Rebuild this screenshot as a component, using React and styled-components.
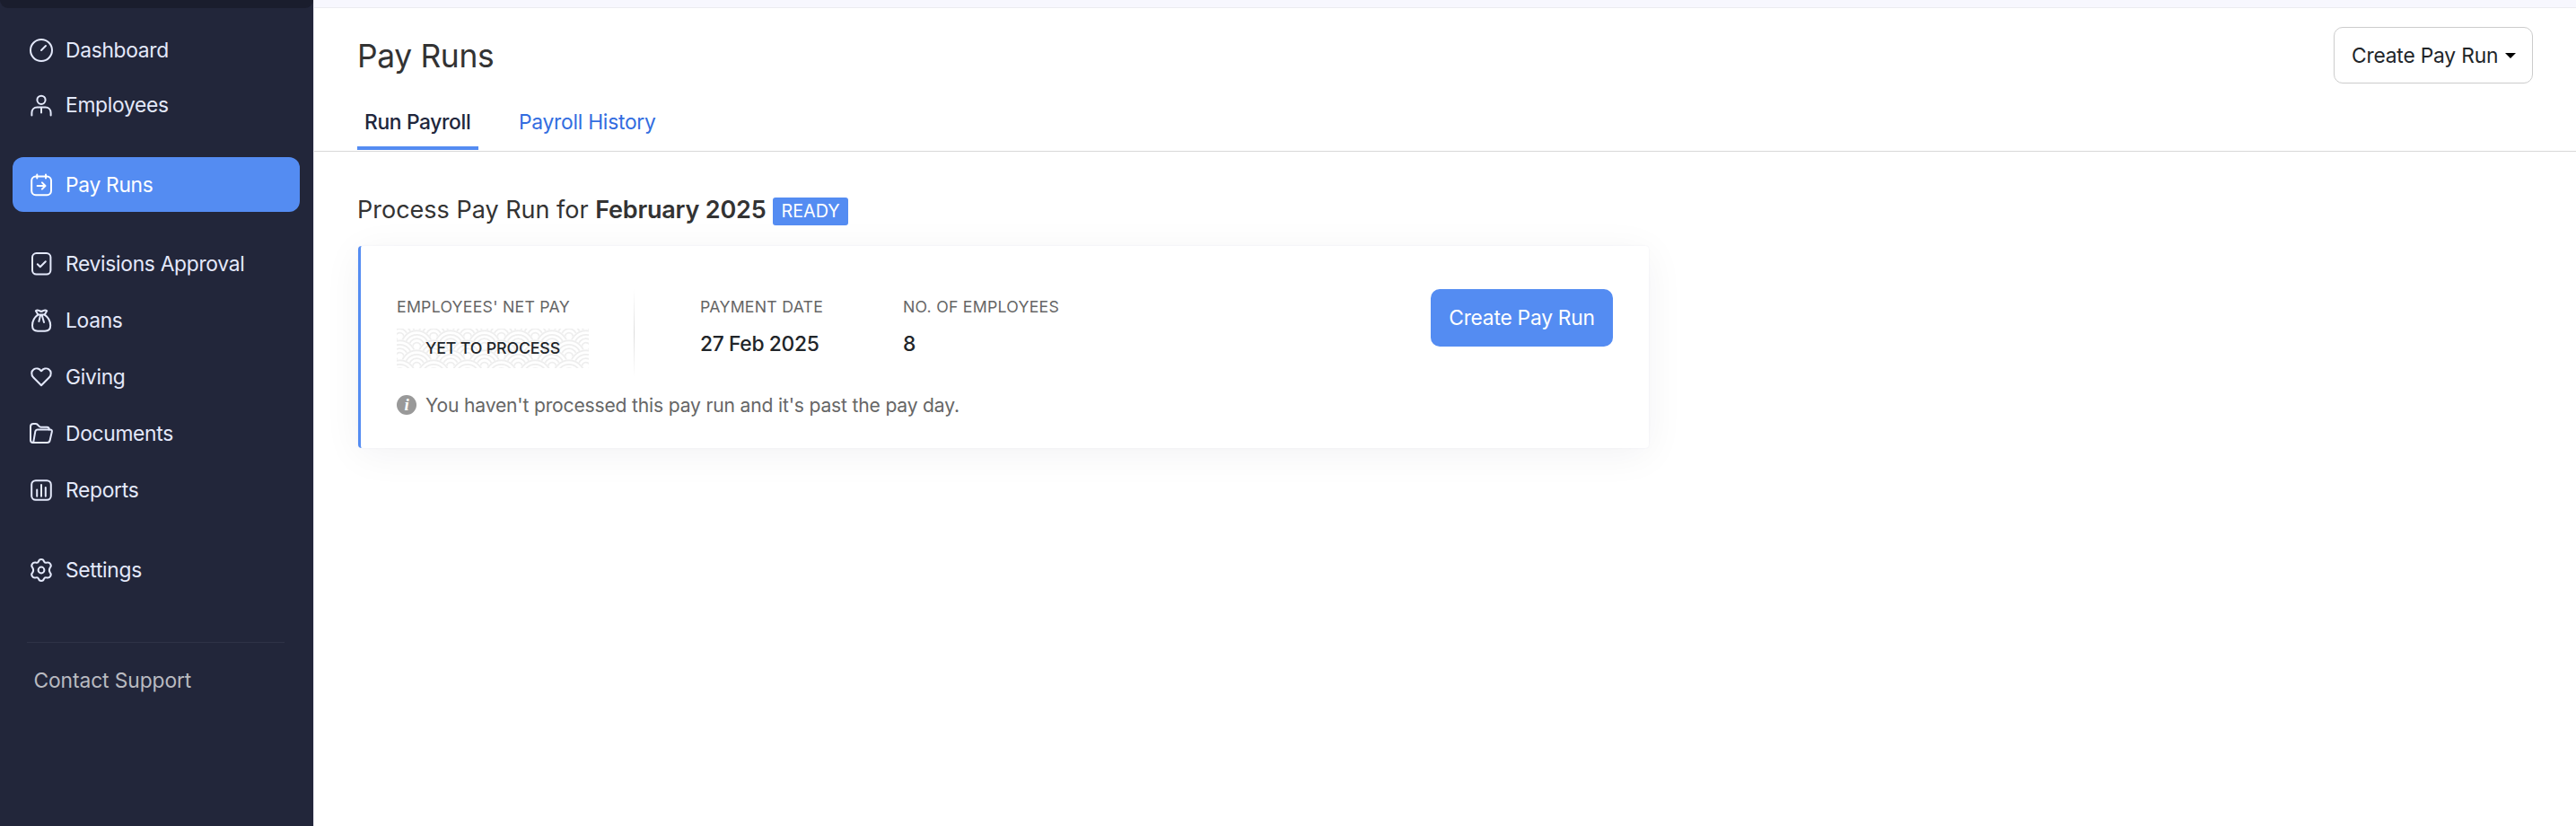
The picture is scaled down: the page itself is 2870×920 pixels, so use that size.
import React from "react"
import styled, { createGlobalStyle } from "styled-components"

const iconPaths = {
  dashboard: (
    <>
      <circle cx="13" cy="13" r="12" />
      <path d="M13 13l5-5" />
    </>
  ),
  employees: (
    <>
      <circle cx="13" cy="7.3" r="4.6" />
      <path d="M2.4 24.4v-2.6c0-3.9 2.6-6.2 6-6.2h9.2c3.4 0 6 2.3 6 6.2v2.6M13 15.8v5.6" />
    </>
  ),
  payRuns: (
    <>
      <rect x="2.2" y="3.6" width="21.8" height="20.6" rx="4.6" />
      <path d="M8.3 1.6v4M18 1.6v4M8.6 14h8.6M13.9 10.4l3.6 3.6-3.6 3.6" />
    </>
  ),
  revisions: (
    <>
      <rect x="3" y="1" width="20.4" height="23.6" rx="4.6" />
      <path d="M8.8 13.2l3 3 6-6" />
    </>
  ),
  loans: (
    <>
      <path d="M9.4 6.4L6.9 2.2C8.6.6 10 1.6 11 2.2c1.2.8 2.8.8 4 0 1-.6 2.6-1.4 4.2 0L16.7 6.4" />
      <path d="M8.8 6.6h8.4M9.2 6.6C5 9.6 3 14.6 3 18.6 3 22.6 5.2 24.8 9 24.8h8c3.8 0 6.2-2.2 6.2-6.2 0-4-2.2-9-6.4-12M12 7.2L10.4 14M13.8 7.2L16 15" />
    </>
  ),
  giving: <path d="M13 22.2L4.3 13.5C1.3 10.4 1.8 6.2 4.6 4.3c2.8-1.8 6.2-.8 8.4 2 2.2-2.8 5.6-3.8 8.4-2 2.8 1.9 3.3 6.1.3 9.2z" />,
  documents: (
    <>
      <path d="M3.6 22.9C1.8 22.9 1 21.9 1 20.3V5.3c0-2.2 1-3.2 3.2-3.2h2.6c3 0 3.2 3.7 5.8 3.7h6.8c1.6 0 2.4.8 2.4 2.6" />
      <path d="M3.6 22.9h16c1.8 0 2.6-.6 3-2.4L24.8 11c.4-1.7-.4-2.6-2-2.6H9c-1.6 0-2.3.7-2.7 2.2L4.2 22.6" />
    </>
  ),
  reports: (
    <>
      <rect x="2.2" y="2.2" width="21.6" height="21.6" rx="4.6" />
      <path d="M8.2 12.6v7.2M13 7v12.8M17.8 10v9.8" />
    </>
  ),
  settings: (
    <>
      <circle cx="13" cy="13" r="3.4" />
      <path d="M10.1 3.2Q10.5 1 13 1T15.9 3.2Q16.8 5.4 19.1 4.6 21.8 3.9 23.2 6.3T22.7 10.2Q21 13 22.7 15.8 24.5 17.5 23.2 19.7T19.1 21.4Q16.8 20.6 15.9 22.8 15.5 25 13 25T10.1 22.8Q9.2 20.6 6.9 21.4 4.2 22.1 2.8 19.7T3.3 15.8Q5 13 3.3 10.2 1.5 8.5 2.8 6.3T6.9 4.6Q9.2 5.4 10.1 3.2z" />
    </>
  ),
}

const navData = [
  { title: "Dashboard", icon: "dashboard", height: 61 },
  { title: "Employees", icon: "employees", height: 61 },
  { title: "Pay Runs", icon: "payRuns", active: true, gap: 28, height: 61 },
  { title: "Revisions Approval", icon: "revisions", gap: 26, height: 63 },
  { title: "Loans", icon: "loans", height: 63 },
  { title: "Giving", icon: "giving", height: 63 },
  { title: "Documents", icon: "documents", height: 63 },
  { title: "Reports", icon: "reports", height: 63 },
  { title: "Settings", icon: "settings", gap: 26, height: 63 },
]

// overlapping fans, every second row shifted by half a fan
const Waves = () => {
  const rows = [0, 1, 2, 3, 4, 5, 6, 7]
  const cols = [0, 1, 2, 3, 4, 5, 6]
  return (
    <WaveArt width="214" height="44" viewBox="0 0 214 44">
      {rows.map(row =>
        cols.map(col => {
          const x = col * 37.7 - 15.4 + (row % 2 ? 18.85 : 0)
          const y = row * 11 - 24
          return (
            <g key={`${row}-${col}`}>
              <circle cx={x} cy={y} r="18.8" fill="#fff" stroke="none" />
              {[17.6, 13.2, 8.8, 4.4].map(r => (
                <circle key={r} cx={x} cy={y} r={r} />
              ))}
            </g>
          )
        })
      )}
    </WaveArt>
  )
}

const Sidebar = () => (
  <SidebarContainer>
    <SidebarTop />
    <NavList>
      {navData.map(item => (
        <NavItem key={item.title} $active={item.active} $gap={item.gap} $height={item.height}>
          <NavIcon viewBox="0 0 26 26">{iconPaths[item.icon]}</NavIcon>
          {item.title}
        </NavItem>
      ))}
    </NavList>
    <SidebarDivider />
    <SupportLink>Contact Support</SupportLink>
  </SidebarContainer>
)

const App = () => (
  <Page>
    <GlobalStyle />
    <Sidebar />
    <Main>
      <TopStrip />
      <Header>
        <HeaderRow>
          <Title>Pay Runs</Title>
          <DropdownButton>
            Create Pay Run
            <Caret viewBox="0 0 12 6">
              <path d="M0 0h12L6 6z" />
            </Caret>
          </DropdownButton>
        </HeaderRow>
        <Tabs>
          <Tab $active>Run Payroll</Tab>
          <Tab>Payroll History</Tab>
        </Tabs>
      </Header>
      <Content>
        <Heading>
          <span>
            Process Pay Run for <strong>February 2025</strong>
          </span>
          <Badge>READY</Badge>
        </Heading>
        <Card>
          <CardRow>
            <NetPay>
              <Label>EMPLOYEES' NET PAY</Label>
              <Pending>
                <Waves />
                <PendingText>YET TO PROCESS</PendingText>
              </Pending>
            </NetPay>
            <CardDivider />
            <Stat $width="226px">
              <Label>PAYMENT DATE</Label>
              <Value>27 Feb 2025</Value>
            </Stat>
            <Stat>
              <Label>NO. OF EMPLOYEES</Label>
              <Value>8</Value>
            </Stat>
            <PrimaryButton>Create Pay Run</PrimaryButton>
          </CardRow>
          <Note>
            <InfoDot>i</InfoDot>
            You haven't processed this pay run and it's past the pay day.
          </Note>
        </Card>
      </Content>
    </Main>
  </Page>
)

const GlobalStyle = createGlobalStyle`
  * {
    box-sizing: border-box;
  }
  body {
    margin: 0;
    background: #fff;
    font-family: Inter, "Liberation Sans", sans-serif;
  }
`
const Page = styled.div`
  display: flex;
  width: 2870px;
  height: 920px;
  overflow: hidden;
  color: #212529;
  font-size: 22.8px;
`
const SidebarContainer = styled.aside`
  display: flex;
  flex-direction: column;
  flex: none;
  width: 349px;
  background: #22263a;
`
const SidebarTop = styled.div`
  height: 9px;
  border-radius: 0 0 14px 14px;
  background: #1a1d2d;
`
const NavList = styled.nav`
  padding: 16px 15px 0 14px;
`
const NavItem = styled.div`
  display: flex;
  align-items: center;
  gap: 14px;
  height: ${props => props.$height}px;
  margin-top: ${props => props.$gap || 0}px;
  padding-left: 19px;
  border-radius: 12px;
  background: ${props => (props.$active ? "#548cf2" : "transparent")};
  color: ${props => (props.$active ? "#fff" : "#e4e9fb")};
  letter-spacing: -0.3px;
`
const NavIcon = styled.svg`
  width: 26px;
  height: 26px;
  fill: none;
  stroke: currentColor;
  stroke-width: 2;
  stroke-linecap: round;
  stroke-linejoin: round;
`
const SidebarDivider = styled.div`
  height: 1px;
  margin: 49px 32px 0 30px;
  background: #2f3347;
`
const SupportLink = styled.div`
  margin: 27px 0 0 37.5px;
  line-height: 30px;
  letter-spacing: -0.1px;
  color: #b9bac0;
`
const Main = styled.main`
  flex: 1;
  border-left: 1px solid #e4e4ec;
`
const TopStrip = styled.div`
  height: 9px;
  background: #f7f7fe;
  border-bottom: 1px solid #ebebf0;
`
const Header = styled.header`
  height: 160px;
  padding: 21px 48px 0;
  border-bottom: 1px solid #d8d8d8;
`
const HeaderRow = styled.div`
  display: flex;
  justify-content: space-between;
  height: 84px;
`
const Title = styled.h1`
  margin: 11px 0 0;
  font-size: 35.4px;
  font-weight: 400;
  line-height: 44px;
  letter-spacing: -0.35px;
  color: #333;
`
const DropdownButton = styled.button`
  display: flex;
  align-items: center;
  justify-content: space-between;
  width: 222px;
  height: 63px;
  padding: 0 18px 0 19px;
  border: 1px solid #ccc;
  border-radius: 10px;
  background: #fff;
  color: #212529;
  font: inherit;
  letter-spacing: -0.2px;
`
const Caret = styled.svg`
  width: 12px;
  height: 6px;
`
const Tabs = styled.div`
  display: flex;
  gap: 37px;
`
const Tab = styled.div`
  width: ${props => (props.$active ? "135px" : "auto")};
  height: 53px;
  padding: 7px 8px 0;
  line-height: 30px;
  font-weight: ${props => (props.$active ? 500 : 400)};
  letter-spacing: ${props => (props.$active ? "-0.35px" : "-0.25px")};
  color: ${props => (props.$active ? "#21263c" : "#326de0")};
  border-bottom: 4px solid ${props => (props.$active ? "#548cf2" : "transparent")};
  white-space: nowrap;
`
const Content = styled.section`
  padding: 46px 49px;
`
const Heading = styled.h2`
  display: flex;
  align-items: center;
  gap: 8px;
  height: 36px;
  margin: 0 0 23px -1px;
  font-size: 27px;
  font-weight: 400;
  color: #333;
  strong {
    font-weight: 600;
    letter-spacing: -0.2px;
  }
`
const Badge = styled.span`
  height: 31px;
  margin-top: 5px;
  padding: 0 9px;
  border-radius: 3px;
  background: #548cf2;
  color: #fff;
  font-size: 19.8px;
  line-height: 31px;
`
const Card = styled.div`
  width: 1438px;
  height: 225px;
  padding: 48px 40px 0;
  border-left: 3px solid #548cf2;
  border-radius: 4px;
  background: #fff;
  box-shadow: 0 7px 44px rgba(20, 20, 50, 0.055), 0 0 2px rgba(60, 60, 180, 0.08);
`
const CardRow = styled.div`
  display: flex;
  height: 110px;
`
const NetPay = styled.div`
  width: 264px;
  padding-top: 8px;
`
const Label = styled.div`
  font-size: 17.7px;
  line-height: 24px;
  letter-spacing: 0.25px;
  color: #666;
`
const Pending = styled.div`
  display: grid;
  width: 214px;
  height: 44px;
  margin-top: 12px;
  overflow: hidden;
  > * {
    grid-area: 1 / 1;
  }
`
const WaveArt = styled.svg`
  fill: none;
  stroke: #eee;
  stroke-width: 1.8;
`
const PendingText = styled.span`
  z-index: 1;
  align-self: center;
  justify-self: center;
  padding-bottom: 1px;
  font-size: 17.8px;
  font-weight: 500;
  letter-spacing: -0.15px;
`
const CardDivider = styled.div`
  width: 1px;
  height: 98px;
  margin-right: 73px;
  background: linear-gradient(transparent, #ddd 50%, transparent);
`
const Stat = styled.div`
  width: ${props => props.$width || "auto"};
  padding-top: 8px;
`
const Value = styled.div`
  margin-top: 14px;
  line-height: 30px;
  font-weight: 500;
  letter-spacing: -0.35px;
`
const PrimaryButton = styled.button`
  width: 203px;
  height: 64px;
  margin-left: auto;
  border: 0;
  border-radius: 10px;
  background: #548cf2;
  color: #fff;
  padding: 0 0 1px;
  font: inherit;
  letter-spacing: -0.25px;
`
const Note = styled.div`
  display: flex;
  align-items: center;
  gap: 10px;
  height: 30px;
  margin-top: 4px;
  font-size: 21.1px;
  letter-spacing: -0.18px;
  color: #666;
`
const InfoDot = styled.span`
  width: 22px;
  height: 22px;
  border-radius: 50%;
  background: #999;
  color: #fff;
  font: italic bold 19px/21px "Liberation Serif", serif;
  text-align: center;
`

export default App
